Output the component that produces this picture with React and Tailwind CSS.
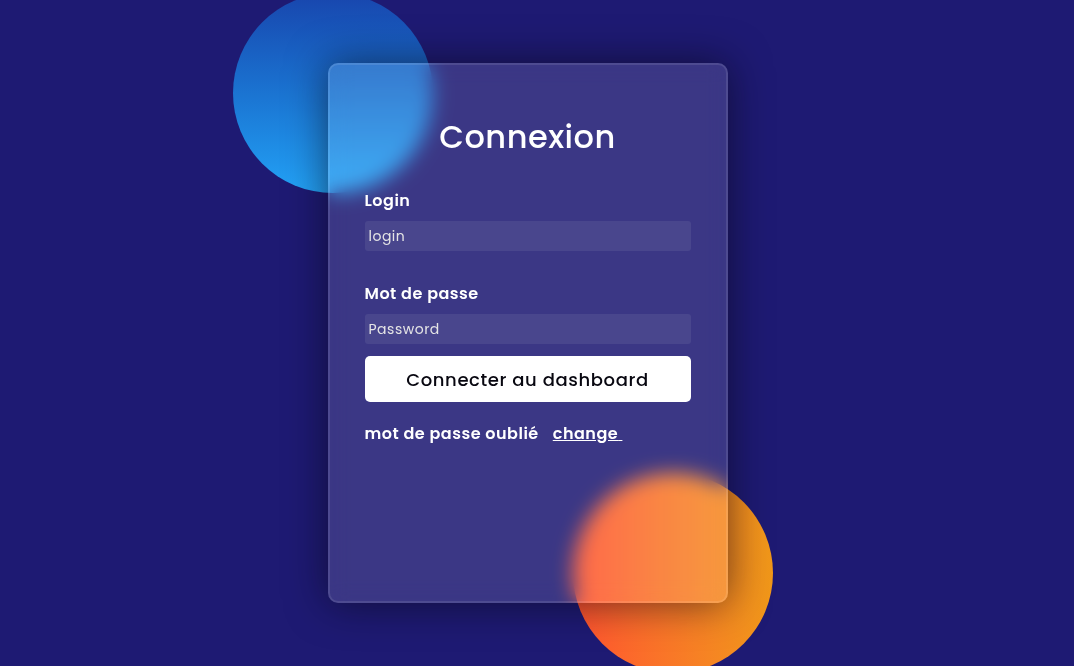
import React from 'react'

const font = { fontFamily: 'Poppins, Inter, "Noto Sans", sans-serif' }

export default function App() {
  return (
    <div
      className="w-full h-[666px] bg-[#1e1a73] flex items-center justify-center pr-[19px] overflow-hidden"
      style={font}
    >
      <div className="relative w-[400px] h-[540px]">
        {/* decorative circles */}
        <div className="absolute left-[-95px] top-[-70px] w-[200px] h-[200px] rounded-full bg-gradient-to-b from-[#1845ad] to-[#23a2f6]" />
        <div className="absolute right-[-45px] bottom-[-70px] w-[200px] h-[200px] rounded-full bg-gradient-to-r from-[#ff512f] to-[#f09819]" />

        <form
          className="relative w-full h-full rounded-[10px] bg-white/[0.13] backdrop-blur-[10px] border-2 border-white/10 shadow-[0_0_40px_rgba(8,7,16,0.6)] px-[35px] pt-[51px] flex flex-col tracking-[0.5px]"
          onSubmit={(e) => e.preventDefault()}
        >
          <h3 className="text-[32px] font-medium leading-[42px] text-white text-center">Connexion</h3>

          <label htmlFor="login" className="mt-[31px] text-[16px] font-semibold leading-[24px] text-white">
            Login
          </label>
          <input
            id="login"
            type="text"
            placeholder="login"
            className="mt-[8px] h-[30px] w-full rounded-[3px] bg-white/[0.07] px-[4px] text-[14px] tracking-[0.5px] text-white placeholder:text-[#e5e5e5] outline-none"
          />

          <label htmlFor="password" className="mt-[31px] text-[16px] font-semibold leading-[24px] text-white">
            Mot de passe
          </label>
          <input
            id="password"
            type="password"
            placeholder="Password"
            className="mt-[8px] h-[30px] w-full rounded-[3px] bg-white/[0.07] px-[4px] text-[14px] tracking-[0.5px] text-white placeholder:text-[#e5e5e5] outline-none"
          />

          <button
            type="submit"
            className="mt-[12px] h-[46px] w-full rounded-[5px] bg-white text-[#080710] text-[18px] font-medium tracking-[0.6px]"
          >
            Connecter au dashboard
          </button>

          <div className="mt-[20px] flex items-center gap-[14px] text-[16px] font-semibold leading-[24px] text-white">
            <span>mot de passe oublié</span>
            <a href="#" className="underline">change{'\u00a0'}</a>
          </div>
        </form>
      </div>
    </div>
  )
}
